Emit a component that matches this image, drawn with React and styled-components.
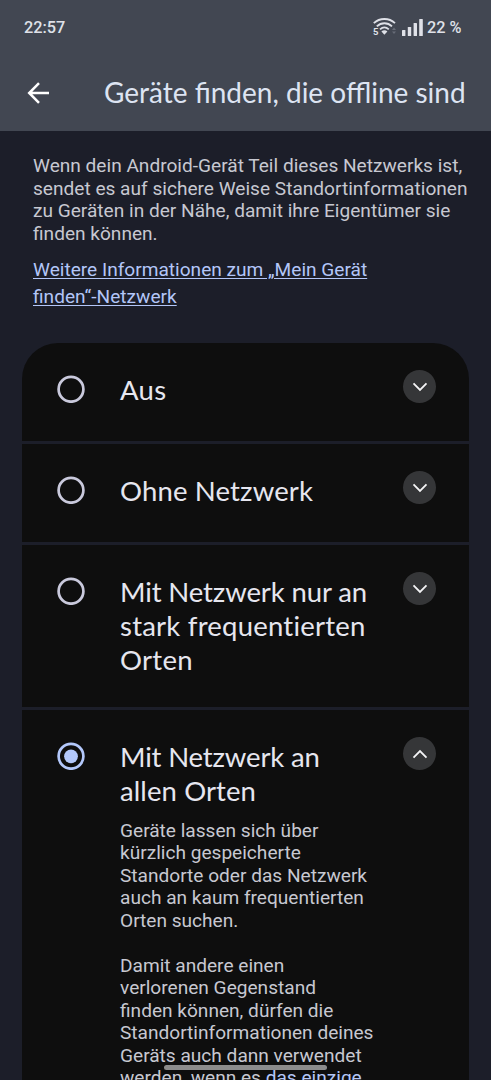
import { Fragment, useState } from 'react';
import styled, { createGlobalStyle } from 'styled-components';

const GlobalStyle = createGlobalStyle`
    * {
        box-sizing: border-box;
    }
    body {
        margin: 0;
        background: #1c1e29;
        overflow: hidden;
    }
`;

const Screen = styled.div`
    position: relative;
    display: flex;
    flex-direction: column;
    width: 491px;
    height: 1080px;
    overflow: hidden;
    background: #1c1e29;
    font-family: Roboto, sans-serif;
`;

const Header = styled.header`
    flex: none;
    height: 131px;
    background: #424752;
`;

const StatusBar = styled.div`
    display: flex;
    align-items: center;
    justify-content: space-between;
    height: 54px;
    padding: 0 29.5px 0 24px;
    color: #dfe1e8;
    font-size: 16.3px;
    font-weight: 500;
`;

const StatusIcons = styled.div`
    display: flex;
    align-items: center;
    svg {
        display: block;
        margin-right: 3.5px;
    }
`;

const TitleBar = styled.div`
    display: flex;
    align-items: center;
    height: 77px;
    padding-left: 27px;
    svg {
        display: block;
        margin-right: 54px;
    }
`;

const Title = styled.h1`
    margin: 0 0 2px;
    color: #dde4f2;
    font-family: Lato, sans-serif;
    font-size: 28px;
    font-weight: 400;
    line-height: 34px;
    white-space: nowrap;
`;

const Intro = styled.section`
    flex: none;
    height: 212px;
    padding: 24px 0 0 33px;
`;

const Text = styled.p`
    margin: 0 0 ${props => props.$gap || '0'};
    color: #c7c8d1;
    font-size: 19.1px;
    line-height: 22.5px;
    white-space: nowrap;
`;

const Link = styled.a`
    color: #b3c6f8;
    text-decoration: underline;
    text-decoration-thickness: 1px;
    text-underline-offset: 2px;
`;

const MoreInfo = styled(Text)`
    line-height: 27px;
`;

const Options = styled.main`
    flex: none;
    display: flex;
    flex-direction: column;
    gap: 3px;
    width: 447px;
    margin-left: 22px;
    border-radius: 36px 36px 0 0;
    overflow: hidden;
`;

const Option = styled.div`
    display: grid;
    grid-template-columns: 63px 283.4px 34px;
    align-items: start;
    height: ${props => props.$height};
    padding: 27px 0 0 35px;
    background: #0e0e0e;
    cursor: pointer;
`;

const RadioIcon = styled.svg`
    display: block;
    margin-top: 5px;
    color: ${props => props.$checked ? '#b3c8fb' : '#c9c9dc'};
`;

const OptionTitle = styled.h2`
    margin: 3px 0 11.5px;
    color: #e6e6ef;
    font-family: Lato, sans-serif;
    font-size: 27.5px;
    font-weight: 400;
    font-variant-ligatures: none;
    line-height: 34.2px;
    white-space: nowrap;
`;

const TitleLine = styled.span`
    display: block;
    letter-spacing: ${props => props.$tracking};
`;

const Toggle = styled.span`
    display: flex;
    align-items: center;
    justify-content: center;
    width: 33px;
    height: 33px;
    border-radius: 50%;
    background: #353638;
    svg {
        transform: ${props => props.$open ? 'rotate(180deg)' : 'none'};
    }
`;

const NavHandle = styled.div`
    position: absolute;
    left: 164px;
    top: 1065px;
    width: 163px;
    height: 5px;
    border-radius: 3px;
    background: #8c8c8c;
`;

const options = [
    { id: 'off', title: [['Aus', '0.3px']], height: '98px' },
    { id: 'solo', title: [['Ohne Netzwerk', '0.15px']], height: '98px' },
    { id: 'busy', title: [['Mit Netzwerk nur an', '-0.12px'], ['stark frequentierten', '0.22px'], ['Orten', '0.3px']], height: '162px' },
    { id: 'all', title: [['Mit Netzwerk an', '-0.16px'], ['allen Orten', '0.1px']], height: '420px', details: true },
];

function Lines({ lines }) {
    return lines.map((line, i) => (
        <Fragment key={line}>
            {i > 0 && <br />}
            {line}
        </Fragment>
    ));
}

function WifiIcon() {
    return (
        <svg width="26" height="20" viewBox="0 0 26 20" fill="none" stroke="#dfe1e8" strokeWidth="1.8">
            <path d="M0.8 6.2C6.8 0.6 16 0.6 22 6.2" />
            <path d="M3.8 9.4C8.2 5.2 14.6 5.2 19 9.4" />
            <path d="M7 12.4C9.8 9.8 13 9.8 15.8 12.4" />
            <path d="M8.4 14.4C10.2 12.9 12.6 12.9 14.4 14.4L11.4 17.8Z" fill="#dfe1e8" stroke="none" />
            <path d="M19 13L21 10.6L23 13ZM19 14.6L21 17L23 14.6Z" fill="#686d78" stroke="none" />
            <text x="0" y="18.2" fill="#dfe1e8" stroke="none" fontSize="9.5" fontWeight="700">5</text>
        </svg>
    );
}

function SignalIcon() {
    return (
        <svg width="21" height="17" viewBox="0 0 21 17" fill="#dfe1e8">
            <rect x="0" y="11" width="3.4" height="6" rx="0.6" />
            <rect x="5.8" y="8" width="3.4" height="9" rx="0.6" />
            <rect x="11.6" y="4" width="3.4" height="13" rx="0.6" />
            <rect x="17.2" y="0" width="3.6" height="17" rx="0.6" />
        </svg>
    );
}

function Radio({ checked }) {
    return (
        <RadioIcon $checked={checked} width="28" height="28" viewBox="0 0 28 28">
            <circle cx="14" cy="14.3" r="12.4" fill="none" stroke="currentColor" strokeWidth="2.7" />
            {checked && <circle cx="14" cy="14.3" r="6.9" fill="currentColor" />}
        </RadioIcon>
    );
}

function Details() {
    return (
        <>
            <Text $gap="22.5px">
                <Lines lines={['Geräte lassen sich über', 'kürzlich gespeicherte', 'Standorte oder das Netzwerk', 'auch an kaum frequentierten', 'Orten suchen.']} />
            </Text>
            <Text>
                <Lines lines={['Damit andere einen', 'verlorenen Gegenstand', 'finden können, dürfen die', 'Standortinformationen deines', 'Geräts auch dann verwendet']} />
                <br />
                werden, wenn es <Link>das einzige</Link>
            </Text>
        </>
    );
}

export default function App() {
    const [selected, setSelected] = useState('all');

    return (
        <Screen>
            <GlobalStyle />
            <Header>
                <StatusBar>
                    <span>22:57</span>
                    <StatusIcons>
                        <WifiIcon />
                        <SignalIcon />
                        <span>22 %</span>
                    </StatusIcons>
                </StatusBar>
                <TitleBar>
                    <svg width="23" height="22" viewBox="0 0 23 22" fill="none" stroke="#ffffff" strokeWidth="2.5">
                        <path d="M22 11H2.4M12 1.2L2.2 11L12 20.8" />
                    </svg>
                    <Title>Geräte finden, die offline sind</Title>
                </TitleBar>
            </Header>
            <Intro>
                <Text $gap="10.6px">
                    <Lines lines={['Wenn dein Android-Gerät Teil dieses Netzwerks ist,', 'sendet es auf sichere Weise Standortinformationen', 'zu Geräten in der Nähe, damit ihre Eigentümer sie', 'finden können.']} />
                </Text>
                <MoreInfo>
                    <Link>
                        <Lines lines={['Weitere Informationen zum „Mein Gerät', 'finden“-Netzwerk']} />
                    </Link>
                </MoreInfo>
            </Intro>
            <Options>
                {options.map(option => (
                    <Option key={option.id} $height={option.height} onClick={() => setSelected(option.id)}>
                        <Radio checked={selected === option.id} />
                        <div>
                            <OptionTitle>
                                {option.title.map(([line, tracking]) => (
                                    <TitleLine key={line} $tracking={tracking}>{line}</TitleLine>
                                ))}
                            </OptionTitle>
                            {option.details && <Details />}
                        </div>
                        <Toggle $open={option.details}>
                            <svg width="16" height="10" viewBox="0 0 16 10" fill="none" stroke="#f4f4f6" strokeWidth="1.8">
                                <path d="M1.5 1.4L8 7.9L14.5 1.4" />
                            </svg>
                        </Toggle>
                    </Option>
                ))}
            </Options>
            <NavHandle />
        </Screen>
    );
}
